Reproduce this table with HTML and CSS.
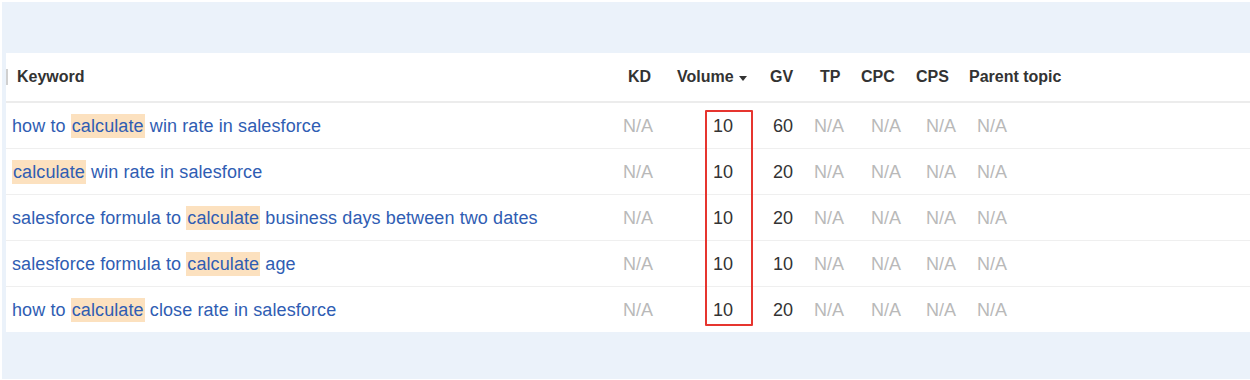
FILE: index.html
```html
<!DOCTYPE html>
<html>
<head>
<meta charset="utf-8">
<link rel="stylesheet" href="styles.css">
</head>
<body>
<div class="frame">
  <div class="panel">
    <div class="grid head">
      <div class="cell kw"><span class="handle"></span>Keyword</div>
      <div class="cell kd">KD</div>
      <div class="cell vol">Volume<span class="caret"></span></div>
      <div class="cell gv">GV</div>
      <div class="cell tp">TP</div>
      <div class="cell cpc">CPC</div>
      <div class="cell cps">CPS</div>
      <div class="cell pt">Parent topic</div>
    </div>
    <div class="grid row">
      <div class="cell kw"><a class="link">how to <span class="hl">calculate</span> win rate in salesforce</a></div>
      <div class="cell kd na">N/A</div>
      <div class="cell vol">10</div>
      <div class="cell gv">60</div>
      <div class="cell tp na">N/A</div>
      <div class="cell cpc na">N/A</div>
      <div class="cell cps na">N/A</div>
      <div class="cell pt na">N/A</div>
    </div>
    <div class="grid row">
      <div class="cell kw"><a class="link"><span class="hl">calculate</span> win rate in salesforce</a></div>
      <div class="cell kd na">N/A</div>
      <div class="cell vol">10</div>
      <div class="cell gv">20</div>
      <div class="cell tp na">N/A</div>
      <div class="cell cpc na">N/A</div>
      <div class="cell cps na">N/A</div>
      <div class="cell pt na">N/A</div>
    </div>
    <div class="grid row">
      <div class="cell kw"><a class="link">salesforce formula to <span class="hl">calculate</span> business days between two dates</a></div>
      <div class="cell kd na">N/A</div>
      <div class="cell vol">10</div>
      <div class="cell gv">20</div>
      <div class="cell tp na">N/A</div>
      <div class="cell cpc na">N/A</div>
      <div class="cell cps na">N/A</div>
      <div class="cell pt na">N/A</div>
    </div>
    <div class="grid row">
      <div class="cell kw"><a class="link">salesforce formula to <span class="hl">calculate</span> age</a></div>
      <div class="cell kd na">N/A</div>
      <div class="cell vol">10</div>
      <div class="cell gv">10</div>
      <div class="cell tp na">N/A</div>
      <div class="cell cpc na">N/A</div>
      <div class="cell cps na">N/A</div>
      <div class="cell pt na">N/A</div>
    </div>
    <div class="grid row last">
      <div class="cell kw"><a class="link">how to <span class="hl">calculate</span> close rate in salesforce</a></div>
      <div class="cell kd na">N/A</div>
      <div class="cell vol">10</div>
      <div class="cell gv">20</div>
      <div class="cell tp na">N/A</div>
      <div class="cell cpc na">N/A</div>
      <div class="cell cps na">N/A</div>
      <div class="cell pt na">N/A</div>
    </div>
    <div class="markbox"></div>
  </div>
</div>
</body>
</html>
```

FILE: styles.css
```css
html, body {
  margin: 0;
  padding: 0;
  background: #ffffff;
}
body {
  font-family: "Liberation Sans", Arial, Helvetica, sans-serif;
  width: 1250px;
  height: 380px;
  overflow: hidden;
}
.frame {
  margin: 2px 0 0 2px;
  height: 377px;
  background: #ebf2fa;
  padding: 51px 0 0 4px;
  box-sizing: border-box;
}
.panel {
  position: relative;
  background: #ffffff;
  width: 1244px;
}
.grid {
  display: grid;
  grid-template-columns: 611px 54px 93px 44px 47px 55px 53px 1fr;
  align-items: center;
}
.head {
  height: 48px;
  border-bottom: 2px solid #ececec;
  font-size: 16px;
  font-weight: bold;
  color: #333333;
}
.row {
  height: 45px;
  border-bottom: 1px solid #efefef;
  font-size: 18px;
  color: #333333;
}
.row .cell {
  padding-top: 2px;
}
.row.last {
  border-bottom: none;
}
.cell {
  white-space: nowrap;
  display: flex;
  align-items: center;
}
.na {
  color: #b9b9b9;
}
.link {
  color: #2f5db3;
  text-decoration: none;
  letter-spacing: 0.1px;
}
.hl {
  background: #fce1bf;
  padding: 2px 1px;
}
.handle {
  display: block;
  width: 2px;
  height: 16px;
  background: #d0d0d0;
  margin-right: 9px;
}
.head .kw { padding-left: 0; }
.row .kw { padding-left: 6px; }
.head .kd { padding-left: 11px; }
.row .kd { padding-left: 6px; }
.head .vol { padding-left: 6px; }
.row .vol { padding-left: 42px; }
.head .gv { padding-left: 6px; }
.row .gv { padding-left: 9px; }
.head .tp { padding-left: 12px; }
.row .tp { padding-left: 6px; }
.head .cpc { padding-left: 6px; }
.row .cpc { padding-left: 16px; }
.head .cps { padding-left: 6px; }
.row .cps { padding-left: 16px; }
.head .pt { padding-left: 6px; }
.row .pt { padding-left: 14px; }
.caret {
  display: inline-block;
  width: 0;
  height: 0;
  border-left: 4.5px solid transparent;
  border-right: 4.5px solid transparent;
  border-top: 5px solid #333333;
  margin-left: 5px;
  margin-top: 2px;
}
.markbox {
  position: absolute;
  left: 699px;
  top: 57px;
  width: 48px;
  height: 216px;
  border: 2px solid #e6352f;
  box-sizing: border-box;
  border-radius: 1px;
}
```
